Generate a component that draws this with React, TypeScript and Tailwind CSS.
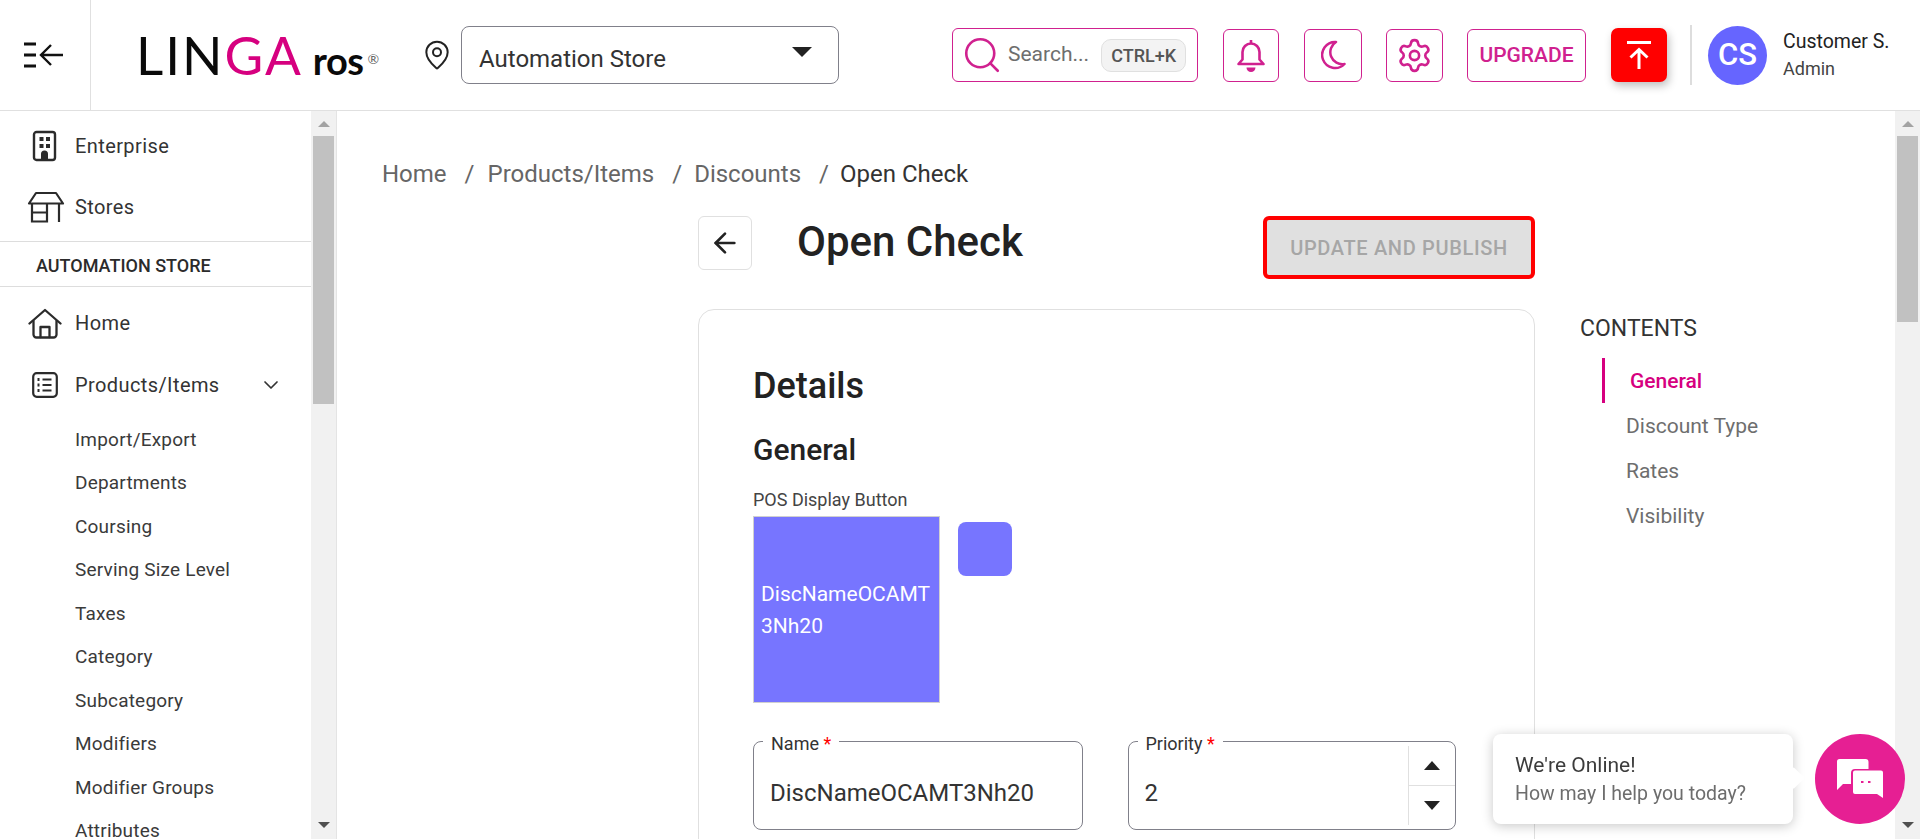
import { ArrowLeft, ChevronDown, MapPin, Search, Settings } from 'lucide-react'

const subItems = [
  'Import/Export',
  'Departments',
  'Coursing',
  'Serving Size Level',
  'Taxes',
  'Category',
  'Subcategory',
  'Modifiers',
  'Modifier Groups',
  'Attributes',
]

const BuildingIcon = () => (
  <svg width="26" height="32" viewBox="0 0 26 32" fill="none" className="text-[#2b2b2b]">
    <rect x="2" y="2" width="21" height="28" rx="2.5" stroke="currentColor" strokeWidth="2.4" />
    <path fill="currentColor" d="M7.5 7h4v4h-4zM14 7h4v4h-4zM7.5 14h4v4h-4zM14 14h4v4h-4zM9 30v-6a3.500 3.500 0 0 1 7 0v6z" />
  </svg>
)

const StoreIcon = () => (
  <svg width="38" height="32" viewBox="0 0 38 32" fill="none" stroke="currentColor" strokeWidth="2.2" className="text-[#2b2b2b]">
    <path d="M9 2h20l7 10.500H2z" strokeLinejoin="round" />
    <path d="M5 13v17.500h15V13M5 21.500h15M32 13v18" />
  </svg>
)

const HomeIcon = () => (
  <svg width="34" height="31" viewBox="0 0 34 31" fill="none" stroke="currentColor" strokeWidth="2.3" className="text-[#2b2b2b]" strokeLinejoin="round" strokeLinecap="round">
    <path d="M1.500 15.500 17 2l15.500 13.500" />
    <path d="M5.500 13v13.500a3 3 0 0 0 3 3h17a3 3 0 0 0 3-3V13" />
    <path d="M12.500 29v-10h9v10" />
  </svg>
)

const ListIcon = () => (
  <svg width="26" height="26" viewBox="0 0 26 26" fill="none" stroke="currentColor" strokeWidth="2.200" className="text-[#2b2b2b]">
    <rect x="1.200" y="1.200" width="23.600" height="23.600" rx="3.500" />
    <path d="M10.500 7.500h9M10.500 13h9M10.500 18.500h9" />
    <path d="M5.500 7.500h2M5.500 13h2M5.500 18.500h2" strokeWidth="2.800" />
  </svg>
)

const BellIcon = () => (
  <svg width="28" height="33" viewBox="0 0 28 33" fill="none" stroke="#d0218f" strokeWidth="2.6" strokeLinejoin="round">
    <path d="M14 1v3" />
    <path d="M5.500 20.500V13a8.500 8.500 0 0 1 17 0v7.500l4 4.500h-25z" />
    <path d="M9.500 28.500h9a4.500 4.500 0 0 1-9 0z" fill="#d0218f" stroke="none" />
  </svg>
)

const MoonIcon = () => (
  <svg width="25" height="30" viewBox="0 0 25 30" fill="none" stroke="#d0218f" strokeWidth="2.5" strokeLinejoin="round">
    <path d="M15 2A13 13 0 1 0 23.500 24 A12 12 0 0 1 15 2z" />
  </svg>
)

const PublishIcon = () => (
  <svg width="24" height="28" viewBox="0 0 24 28" fill="none" stroke="#fff" strokeWidth="3">
    <path d="M0 1.500h24" />
    <path d="M12 28V9M3.500 16.500 12 8.500l8.500 8" />
  </svg>
)

const ChatIcon = () => (
  <svg width="47" height="41" viewBox="0 0 47 41" fill="none">
    <path fill="#fff" d="M2.500 0h26a3 3 0 0 1 3 3v7H18a4 4 0 0 0-4 4v11H6l-6 6V2.500A2.500 2.500 0 0 1 2.500 0z" />
    <path fill="#fff" d="M18 11.500h26a2 2 0 0 1 2 2V39l-6-4H18a2 2 0 0 1-2-2V13.500a2 2 0 0 1 2-2z" />
    <path stroke="#e61f93" strokeWidth="2" strokeDasharray="2.500 4.500" d="M24 23h14" />
  </svg>
)

function Scrollbar({ thumbHeight }: { thumbHeight: string }) {
  return (
    <div className="w-[25px] shrink-0 bg-[#f1f1f1] flex flex-col items-center">
      <div className="mt-[10px] w-0 h-0 border-x-[6px] border-x-transparent border-b-[6px] border-b-[#a3a3a3]" />
      <div className={`mt-[9px] ${thumbHeight} w-[21px] bg-[#c1c1c1]`} />
      <div className="mt-auto mb-[11px] w-0 h-0 border-x-[6px] border-x-transparent border-t-[6px] border-t-[#505050]" />
    </div>
  )
}

function Header() {
  return (
    <header className="h-[111px] shrink-0 flex items-center border-b border-[#e0e0e0] bg-white">
      <div className="w-[91px] h-full flex items-center justify-center border-r border-[#e0e0e0] shrink-0">
        <svg width="41" height="28" viewBox="0 0 41 28" fill="none" stroke="#111" className="-ml-[3px]">
          <path d="M1 3h12M1 14h12M1 25h12" strokeWidth="3" />
          <path d="M40 14H19M28 4l-10 10 10 10" strokeWidth="2.400" />
        </svg>
      </div>
      <div className="ml-[45px] w-[240px] h-[54px] flex items-baseline font-['Lato',sans-serif] text-[#0a0a0a] shrink-0">
        <span className="text-[53px] leading-[54px] font-normal tracking-[2px]">LIN</span>
        <span className="text-[53px] leading-[54px] font-normal text-[#d6007f] tracking-[2px]">GA</span>
        <span className="ml-[10px] text-[38px] leading-[54px] font-bold tracking-[-0.5px]">ros</span>
        <span className="text-[14px] leading-[14px] self-start mt-[24px] ml-[4px] text-[#666]">®</span>
      </div>
      <MapPin className="ml-[45px] w-[32px] h-[32px] text-[#222] shrink-0" strokeWidth={1.5} />
      <div className="ml-[8px] w-[378px] h-[58px] border border-[#80808a] rounded-[8px] flex items-center justify-between pl-[17px] pr-[26px] shrink-0">
        <span className="text-[24px] text-[#333] mt-[8px]">Automation Store</span>
        <span className="w-0 h-0 border-x-[10px] border-x-transparent border-t-[10px] border-t-[#222] -mt-[6px]" />
      </div>

      <div className="ml-[113px] w-[246px] h-[54px] border border-[#d0218f] rounded-[6px] flex items-center pl-[8px] shrink-0">
        <Search className="w-[42px] h-[42px] text-[#d0218f]" strokeWidth={1.500} />
        <span className="ml-[5px] text-[21px] text-[#6e6e6e]">Search...</span>
        <span className="ml-[12px] w-[85px] h-[33px] flex items-center justify-center bg-[#f3f3f3] border border-[#e0e0e0] rounded-[10px] text-[18px] font-medium text-[#555]">CTRL+K</span>
      </div>
      <div className="ml-[25px] w-[56px] h-[53px] border border-[#d0218f] rounded-[6px] flex items-center justify-center shrink-0">
        <BellIcon />
      </div>
      <div className="ml-[25px] w-[58px] h-[53px] border border-[#d0218f] rounded-[6px] flex items-center justify-center shrink-0">
        <MoonIcon />
      </div>
      <div className="ml-[24px] w-[57px] h-[53px] border border-[#d0218f] rounded-[6px] flex items-center justify-center shrink-0">
        <Settings className="w-[37px] h-[37px] text-[#d0218f]" strokeWidth={1.700} />
      </div>
      <div className="ml-[24px] w-[119px] h-[53px] pt-[2px] border border-[#d0218f] rounded-[6px] flex items-center justify-center text-[21px] font-medium text-[#d0218f] shrink-0">UPGRADE</div>
      <div className="ml-[25px] w-[56px] h-[54px] bg-[#ff0000] rounded-[7px] shadow-[2px_4px_8px_rgba(0,0,0,0.25)] flex items-center justify-center shrink-0">
        <PublishIcon />
      </div>
      <div className="ml-[23px] w-[2px] h-[60px] bg-[#dddddd] shrink-0" />
      <div className="ml-[16px] w-[59px] h-[59px] rounded-full bg-[#6665ff] text-white flex items-center justify-center text-[31px] font-medium shrink-0">CS</div>
      <div className="ml-[16px] pb-[2px] flex flex-col shrink-0">
        <span className="text-[19.500px] text-[#222] leading-[24px]">Customer S.</span>
        <span className="text-[18px] text-[#444] leading-[20px] mt-[5px]">Admin</span>
      </div>
    </header>
  )
}

function Sidebar() {
  return (
    <aside className="w-[337px] shrink-0 flex overflow-hidden border-r border-[#e4e4e4]">
      <nav className="w-[311px] text-[#333] text-[20px] tracking-[0.4px]">
        <div className="h-[62px] flex items-center pl-[32px] mt-[4px]">
          <span className="w-[43px]"><BuildingIcon /></span>Enterprise
        </div>
        <div className="h-[60px] flex items-center pl-[27px]">
          <span className="w-[48px]"><StoreIcon /></span>Stores
        </div>
        <div className="h-[46px] flex items-center pl-[36px] pt-[2px] border-y border-[#dddddd] text-[18px] font-medium tracking-normal text-[#2b2b2b] mt-[4px]">AUTOMATION STORE</div>
        <div className="h-[62px] flex items-center pl-[28px] mt-[5px]">
          <span className="w-[47px]"><HomeIcon /></span>Home
        </div>
        <div className="h-[62px] flex items-center pl-[32px]">
          <span className="w-[43px]"><ListIcon /></span>Products/Items
          <ChevronDown className="ml-[39px] w-[24px] h-[24px] text-[#333]" strokeWidth={1.700} />
        </div>
        <div className="pl-[75px] mt-[2px]">
          {subItems.map((item) => (
            <div key={item} className="h-[43.500px] flex items-center text-[19px] tracking-[0.2px] text-[#3a3a3a]">{item}</div>
          ))}
        </div>
      </nav>
      <Scrollbar thumbHeight="h-[268px]" />
    </aside>
  )
}

function Field({ label, className, children }: { label: string; className: string; children: React.ReactNode }) {
  return (
    <div className={`relative h-[89px] border border-[#80808a] rounded-[8px] ${className}`}>
      <span className="absolute -top-[9px] left-[9px] bg-white px-[8px] text-[18px] leading-[22px] text-[#333]">
        {label} <span className="text-[#ff0000]">*</span>
      </span>
      {children}
    </div>
  )
}

export default function App() {
  return (
    <div className="h-screen flex flex-col overflow-hidden bg-white font-['Roboto',sans-serif]">
      <Header />
      <div className="flex-1 flex min-h-0">
        <Sidebar />
        <main className="flex-1 min-w-0 overflow-hidden pl-[45px]">
          <div className="mt-[48px] h-[30px] flex items-center text-[24px] text-[#666]">
            <span>Home</span>
            <span className="ml-[18px]">/</span>
            <span className="ml-[13px]">Products/Items</span>
            <span className="ml-[18px]">/</span>
            <span className="ml-[12px]">Discounts</span>
            <span className="ml-[18px]">/</span>
            <span className="ml-[11px] text-[#333]">Open Check</span>
          </div>
          <div className="ml-[316px] w-[837px] mt-[27px] flex items-start">
            <div className="w-[54px] h-[54px] border border-[#e0e0e0] rounded-[6px] flex items-center justify-center">
              <ArrowLeft className="w-[32px] h-[32px] text-[#222]" strokeWidth={2} />
            </div>
            <h1 className="ml-[45px] mt-[1px] text-[42px] leading-[50px] font-medium text-[#222]">Open Check</h1>
            <button className="ml-auto w-[272px] h-[63px] bg-[#e0e0e0] border-[4px] border-[#ff0000] rounded-[6px] text-[20px] font-medium tracking-[0.65px] text-[#a6a6a6]">UPDATE AND PUBLISH</button>
          </div>
          <div className="ml-[316px] w-[837px] mt-[30px] border border-[#e0e0e0] rounded-[16px] pt-[55px] pl-[54px] pr-[78px] h-[620px]">
            <h2 className="text-[36px] leading-[42px] font-medium text-[#222]">Details</h2>
            <h3 className="mt-[25px] text-[30px] leading-[36px] font-medium text-[#222]">General</h3>
            <div className="mt-[21px] text-[18px] leading-[22px] text-[#444]">POS Display Button</div>
            <div className="mt-[5px] flex items-start">
              <div className="w-[187px] h-[187px] bg-[#7775ff] border border-[#d0d0d0] flex items-center px-[7px] text-[21px] leading-[32px] text-white break-all">DiscNameOCAMT3Nh20</div>
              <div className="ml-[18px] mt-[6px] w-[54px] h-[54px] bg-[#7775ff] rounded-[8px]" />
            </div>
            <div className="mt-[38px] flex">
              <Field label="Name" className="w-[331px]">
                <div className="pl-[16px] pt-[35px] text-[24px] leading-[32px] text-[#333]">DiscNameOCAMT3Nh20</div>
              </Field>
              <Field label="Priority" className="ml-[45px] w-[330px] flex">
                <div className="flex-1 pl-[16px] pt-[35px] text-[24px] leading-[32px] text-[#333]">2</div>
                <div className="w-[47px] my-[4px] border-l border-[#e0e0e0] flex flex-col">
                  <div className="flex-1 flex items-center justify-center border-b border-[#e0e0e0]">
                    <span className="w-0 h-0 border-x-[8px] border-x-transparent border-b-[9px] border-b-[#222]" />
                  </div>
                  <div className="flex-1 flex items-center justify-center">
                    <span className="w-0 h-0 border-x-[8px] border-x-transparent border-t-[9px] border-t-[#222]" />
                  </div>
                </div>
              </Field>
            </div>
          </div>
        </main>
        <aside className="w-[315px] shrink-0 pt-[204px] text-[#6e6e6e] text-[21px]">
          <div className="text-[23px] leading-[28px] text-[#333]">CONTENTS</div>
          <div className="ml-[22px] mt-[15px] h-[45px] border-l-[3px] border-[#d6007f] pl-[25px] pt-[2px] flex items-center text-[21px] font-medium text-[#d6007f]">General</div>
          <div className="ml-[46px] mt-[5px] leading-[37px]">Discount Type</div>
          <div className="ml-[46px] mt-[8px] leading-[37px]">Rates</div>
          <div className="ml-[46px] mt-[8px] leading-[37px]">Visibility</div>
        </aside>
        <Scrollbar thumbHeight="h-[186px]" />
      </div>

      {/* Chat widget */}
      <div className="fixed top-[734px] left-[1493px] flex items-center">
        <div className="relative w-[300px] h-[90px] bg-white rounded-[8px] shadow-[0_2px_12px_rgba(0,0,0,0.22)] pl-[22px] pt-[16px]">
          <div className="text-[21px] leading-[30px] text-[#3c3c3c]">We're Online!</div>
          <div className="text-[19.500px] leading-[28px] text-[#6d6d6d]">How may I help you today?</div>
          <span className="absolute top-[36px] -right-[8px] w-[16px] h-[16px] rotate-45 bg-white rounded-[2px]" />
        </div>
        <div className="ml-[22px] w-[90px] h-[90px] rounded-full bg-[#e61f93] flex items-center justify-center">
          <ChatIcon />
        </div>
      </div>
    </div>
  )
}
